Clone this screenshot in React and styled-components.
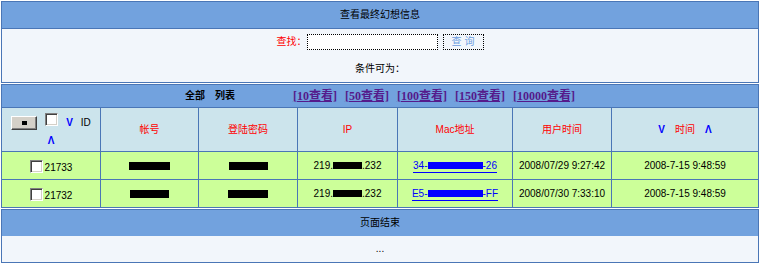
import React from 'react';
import styled, { createGlobalStyle } from 'styled-components';

const BORDER = '#4a76b6';
const HEAD_BLUE = '#72a2de';
const LIGHT = '#f2f6fb';
const CYAN = '#cce4ec';
const GREEN = '#ccff99';

const Global = createGlobalStyle`
  html, body { margin: 0; padding: 0; background: #fff; }
  body {
    font-family: "Liberation Sans", "Noto Sans CJK SC", sans-serif;
    font-size: 10px;
    color: #000;
  }
`;

const Page = styled.div`
  width: 758px;
  padding: 1px;
  display: flex;
  flex-direction: column;
  gap: 1px;
`;

const Panel = styled.section`
  border: 1px solid ${BORDER};
  background: ${LIGHT};
  display: flex;
  flex-direction: column;
`;

const PanelHead = styled.div`
  height: 26px;
  background: ${HEAD_BLUE};
  display: flex;
  align-items: center;
  justify-content: center;
  line-height: 12px;
  border-bottom: ${(p) => (p.$divided ? `1px solid ${BORDER}` : 'none')};
`;

const SearchBody = styled.div`
  height: 53px;
  box-sizing: border-box;
  padding-top: 5px;
  display: flex;
  flex-direction: column;
  align-items: center;
`;

const SearchRow = styled.form`
  margin: 0;
  height: 16px;
  display: flex;
  align-items: center;
`;

const Label = styled.span`
  color: #ff0000;
  line-height: 12px;
`;

const SearchInput = styled.input`
  box-sizing: border-box;
  width: 131px;
  height: 16px;
  border: 1px dotted #000;
  background: #fff;
  padding: 0 2px;
  margin: 0;
  outline: none;
`;

const QueryButton = styled.button`
  box-sizing: border-box;
  width: 41px;
  height: 16px;
  margin-left: 5px;
  padding: 0;
  border: 1px dotted #000;
  background: ${LIGHT};
  color: #6e9ee0;
  font: inherit;
  line-height: 12px;
`;

const Hint = styled.div`
  margin-top: 13px;
  line-height: 12px;
`;

const FooterBody = styled.div`
  height: 26px;
  display: flex;
  align-items: center;
  justify-content: center;
  line-height: 12px;
`;

const Grid = styled.div`
  display: grid;
  grid-template-columns: 98px 97px 98px 99px 114px 98px 146px;
  grid-template-rows: 22px 43px 27px 27px;
  gap: 1px;
  padding: 1px;
  background: ${BORDER};
`;

const ListBar = styled.div`
  grid-column: 1 / -1;
  background: ${HEAD_BLUE};
  display: flex;
  align-items: center;
  justify-content: center;
`;

const ListTitle = styled.strong`
  font-weight: 700;
  word-spacing: 7px;
  margin-right: 58px;
  line-height: 12px;
`;

const PageLinks = styled.nav`
  display: flex;
  gap: 8px;
`;

const PageLink = styled.a`
  font-family: "Liberation Serif", "Noto Sans CJK SC", serif;
  font-weight: 700;
  font-size: 12px;
  line-height: 14px;
  color: #551a8b;
  text-decoration: underline;
  cursor: pointer;
`;

const ColHead = styled.div`
  background: ${CYAN};
  color: #ff0000;
  display: flex;
  align-items: center;
  justify-content: center;
  gap: ${(p) => p.$gap || 0}px;
  line-height: 12px;
`;

const HeadStack = styled.div`
  display: flex;
  flex-direction: column;
  align-items: center;
  color: #000;
`;

const HeadLine = styled.div`
  height: 20px;
  display: flex;
  align-items: center;
  gap: 8px;
`;

const TopCheck = styled.span`
  align-self: flex-start;
`;

const Arrow = styled.span`
  color: #0000ff;
  font-family: "Liberation Sans", sans-serif;
  font-weight: 700;
  font-size: 10px;
  line-height: 10px;
  margin-top: ${(p) => p.$top || 0}px;
`;

const MiniButton = styled.span`
  box-sizing: border-box;
  width: 26px;
  height: 14px;
  background: #d4d0c8;
  border: 1px solid;
  border-color: #fff #404040 #404040 #fff;
  box-shadow: inset -1px -1px 0 #808080;
  display: flex;
  align-items: center;
  justify-content: center;
  &::after {
    content: '';
    width: 5px;
    height: 4px;
    background: #000;
  }
`;

const Check = styled.span`
  display: block;
  box-sizing: border-box;
  width: 13px;
  height: 13px;
  background: #fff;
  border: 1px solid;
  border-color: #808080 #fff #fff #808080;
  box-shadow: inset 1px 1px 0 #404040, inset -1px -1px 0 #d4d0c8;
`;

const DataCell = styled.div`
  background: ${GREEN};
  display: flex;
  align-items: ${(p) => (p.$bottom ? 'flex-end' : 'center')};
  justify-content: center;
  gap: ${(p) => p.$gap || 0}px;
  line-height: 10px;
  padding-bottom: ${(p) => (p.$bottom ? 6 : 0)}px;
  box-sizing: border-box;
`;

const Redact = styled.span`
  display: inline-block;
  width: ${(p) => p.$w}px;
  height: ${(p) => p.$h || 7}px;
  background: ${(p) => p.$color || '#000'};
`;

const IpText = styled.span`
  display: inline-flex;
  align-items: center;
`;

const MacLink = styled.a`
  display: inline-flex;
  align-items: center;
  color: #0000ff;
  text-decoration: none;
  border-bottom: 1px solid #0000ff;
  padding-bottom: 1px;
  margin-top: 2px;
  cursor: pointer;
`;

const rows = [
  { id: '21733', acc: 41, pwd: 39, macA: '34', macB: '26', user: '2008/07/29 9:27:42', time: '2008-7-15 9:48:59' },
  { id: '21732', acc: 39, pwd: 40, macA: 'E5', macB: 'FF', user: '2008/07/30 7:33:10', time: '2008-7-15 9:48:59' },
];

const links = ['10', '50', '100', '150', '10000'];

export default function App() {
  return (
    <>
      <Global />
      <Page>
        <Panel>
          <PanelHead $divided>查看最终幻想信息</PanelHead>
          <SearchBody>
            <SearchRow onSubmit={(e) => e.preventDefault()}>
              <Label>查找：</Label>
              <SearchInput type="text" />
              <QueryButton type="submit">查 询</QueryButton>
            </SearchRow>
            <Hint>条件可为：</Hint>
          </SearchBody>
        </Panel>

        <Grid>
          <ListBar>
            <ListTitle>全部 列表</ListTitle>
            <PageLinks>
              {links.map((n) => (
                <PageLink key={n}>[{n}查看]</PageLink>
              ))}
            </PageLinks>
          </ListBar>

          <ColHead>
            <HeadStack>
              <HeadLine>
                <MiniButton />
                <TopCheck><Check /></TopCheck>
                <Arrow>V</Arrow>
                <span>ID</span>
              </HeadLine>
              <Arrow $top={3}>Λ</Arrow>
            </HeadStack>
          </ColHead>
          <ColHead>帐号</ColHead>
          <ColHead>登陆密码</ColHead>
          <ColHead>IP</ColHead>
          <ColHead>Mac地址</ColHead>
          <ColHead>用户时间</ColHead>
          <ColHead $gap={10}>
            <Arrow>V</Arrow>
            <span>时间</span>
            <Arrow>Λ</Arrow>
          </ColHead>

          {rows.map((r) => (
            <React.Fragment key={r.id}>
              <DataCell $bottom $gap={2}>
                <Check />
                <span>{r.id}</span>
              </DataCell>
              <DataCell><Redact $w={r.acc} $h={8} /></DataCell>
              <DataCell><Redact $w={r.pwd} $h={8} /></DataCell>
              <DataCell>
                <IpText>219.<Redact $w={29} />.232</IpText>
              </DataCell>
              <DataCell>
                <MacLink>
                  {r.macA}-<Redact $w={55} $color="#0000ff" />-{r.macB}
                </MacLink>
              </DataCell>
              <DataCell>{r.user}</DataCell>
              <DataCell>{r.time}</DataCell>
            </React.Fragment>
          ))}
        </Grid>

        <Panel>
          <PanelHead>页面结束</PanelHead>
          <FooterBody>...</FooterBody>
        </Panel>
      </Page>
    </>
  );
}
